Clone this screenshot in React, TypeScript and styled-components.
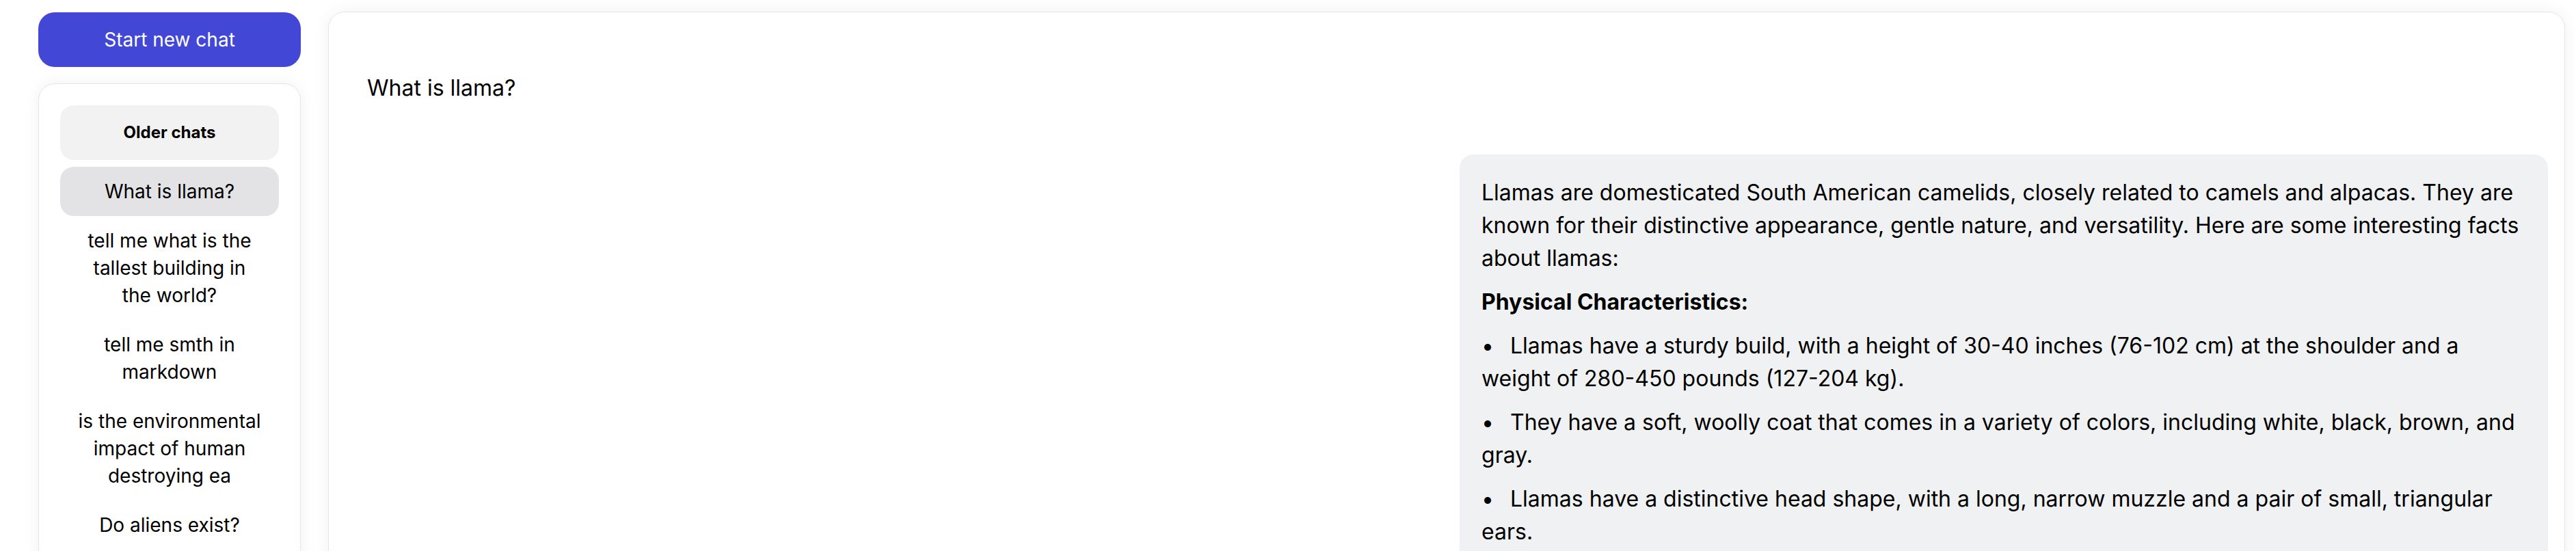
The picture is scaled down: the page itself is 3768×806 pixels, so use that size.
import React from 'react';
import styled, { createGlobalStyle } from 'styled-components';

const GlobalStyle = createGlobalStyle`
  * { box-sizing: border-box; }
  html, body {
    margin: 0;
    padding: 0;
    background: #fff;
    overflow: hidden;
  }
  body {
    font-family: Inter, "Noto Sans", sans-serif;
    color: #000;
  }
`;

const chats = [
    'What is llama?',
    'tell me what is the tallest building in the world?',
    'tell me smth in markdown',
    'is the environmental impact of human destroying ea',
    'Do aliens exist?',
];

const facts = [
    'Llamas have a sturdy build, with a height of 30-40 inches (76-102 cm) at the shoulder and a weight of 280-450 pounds (127-204 kg).',
    'They have a soft, woolly coat that comes in a variety of colors, including white, black, brown, and gray.',
    'Llamas have a distinctive head shape, with a long, narrow muzzle and a pair of small, triangular ears.',
];

export default function App() {
    return (
        <>
            <GlobalStyle/>
            <Page>
                <Sidebar>
                    <NewChatButton>Start new chat</NewChatButton>
                    <HistoryPanel>
                        <HistoryTitle>Older chats</HistoryTitle>
                        {chats.map((c, i) => (
                            <ChatItem key={c} $active={i === 0}>{c}</ChatItem>
                        ))}
                    </HistoryPanel>
                </Sidebar>

                <MainPanel>
                    <Messages>
                        <UserMessage>What is llama?</UserMessage>
                        <AssistantBubble>
                            <Paragraph>
                                Llamas are domesticated South American camelids, closely related to camels and
                                alpacas. They are known for their distinctive appearance, gentle nature, and
                                versatility. Here are some interesting facts about llamas:
                            </Paragraph>
                            <Paragraph><strong>Physical Characteristics:</strong></Paragraph>
                            <BulletList>
                                {facts.map(f => <Bullet key={f}>{f}</Bullet>)}
                            </BulletList>
                        </AssistantBubble>
                    </Messages>
                </MainPanel>
            </Page>
        </>
    );
}

const Page = styled.div`
  display: flex;
  align-items: flex-start;
  gap: 40px;
  height: 100vh;
  padding: 17px 16px 0 56px;
  overflow: hidden;
`

const Sidebar = styled.aside`
  display: flex;
  flex-direction: column;
  gap: 24px;
  width: 384px;
  flex-shrink: 0;
  padding-top: 1px;
`

const NewChatButton = styled.button`
  flex-shrink: 0;
  height: 80px;
  border: none;
  border-radius: 24px;
  background: #4247d6;
  color: #fff;
  font-family: inherit;
  font-size: 28px;
  line-height: 40px;
  cursor: pointer;
`

const HistoryPanel = styled.div`
  display: flex;
  flex-direction: column;
  min-height: 900px;
  padding: 31px;
  background: #fff;
  border: 1px solid #e6e6e6;
  border-radius: 24px;
  box-shadow: 0 0 24px rgba(0, 0, 0, 0.06);
`

const HistoryTitle = styled.div`
  padding: 24px 16px;
  margin-bottom: 10px;
  border-radius: 20px;
  background: #f2f2f2;
  font-size: 24px;
  line-height: 32px;
  font-weight: 700;
  text-align: center;
`

const ChatItem = styled.div<{ $active?: boolean }>`
  padding: 16px 26px;
  border-radius: 20px;
  background: ${p => p.$active ? '#e3e3e5' : 'transparent'};
  font-size: 28px;
  line-height: 40px;
  text-align: center;
`

const MainPanel = styled.main`
  flex: 1;
  min-height: 900px;
  padding: 55px 24px 0;
  background: #fff;
  border: 1px solid #e6e6e6;
  border-radius: 24px;
  box-shadow: 0 0 24px rgba(0, 0, 0, 0.06);
`

const Messages = styled.div`
  display: flex;
  flex-direction: column;
  gap: 41px;
`

const UserMessage = styled.div`
  padding: 32px;
  font-size: 32px;
  line-height: 48px;
`

const AssistantBubble = styled.div`
  align-self: flex-end;
  width: 1592px;
  min-height: 700px;
  padding: 32px;
  border-radius: 20px;
  background: #f0f1f3;
  font-size: 32px;
  line-height: 48px;
`

const Paragraph = styled.p`
  margin: 0 0 16px;
`

const BulletList = styled.ul`
  margin: 0;
  padding: 0;
  list-style: none;
`

const Bullet = styled.li`
  margin-bottom: 16px;

  &::before {
    content: '•';
    display: inline-block;
    width: 42px;
  }
`
